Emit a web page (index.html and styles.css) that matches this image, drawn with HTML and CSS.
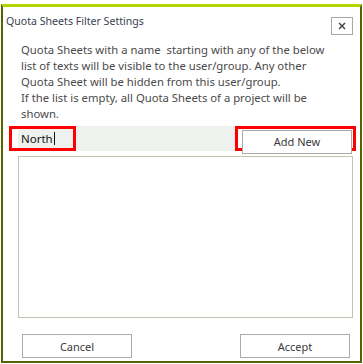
FILE: index.html
```html
<!DOCTYPE html>
<html lang="en">
<head>
    <meta charset="UTF-8">
    <title>Quota Sheets Filter Settings</title>
    <link rel="stylesheet" href="styles.css">
</head>
<body>
    <div class="dialog">
        <header class="dialog-header">
            <h1 class="dialog-title">Quota Sheets Filter Settings</h1>
            <button class="close-btn">
                <svg width="8" height="8" viewBox="0 0 8 8" stroke="#444" stroke-width="1.4">
                    <line x1="1" y1="1" x2="7" y2="7"></line>
                    <line x1="7" y1="1" x2="1" y2="7"></line>
                </svg>
            </button>
        </header>

        <p class="description">
            Quota Sheets with a name&nbsp; starting with any of the below<br>
            list of texts will be visible to the user/group. Any other<br>
            Quota Sheet will be hidden from this user/group.<br>
            If the list is empty, all Quota Sheets of a project will be<br>
            shown.
        </p>

        <div class="add-row">
            <div class="highlight name-box">
                <div class="name-input">North<span class="caret"></span></div>
            </div>
            <div class="highlight add-box">
                <button class="btn add-btn">Add New</button>
            </div>
        </div>

        <div class="filter-list"></div>

        <footer class="dialog-footer">
            <button class="btn">Cancel</button>
            <button class="btn">Accept</button>
        </footer>
    </div>
</body>
</html>
```

FILE: styles.css
```css
* {
    margin: 0;
    padding: 0;
    box-sizing: border-box;
    font-family: 'Noto Sans', sans-serif;
}

body {
    background-color: #ffffff;
    padding: 4px 0 0 1px;
}

.dialog {
    width: 361px;
    height: 359px;
    border: 2px solid #566400;
    border-top: 3px solid #b2d600;
    background-color: #ffffff;
    display: flex;
    flex-direction: column;
}

.dialog-header {
    display: flex;
    align-items: flex-start;
    justify-content: space-between;
    padding: 7px 7px 0 3px;
    height: 32px;
}

.dialog-title {
    font-size: 10.6px;
    font-weight: 400;
    color: #3c4150;
    line-height: 15px;
}

.close-btn {
    margin-top: 3px;
    width: 22px;
    height: 18px;
    border: 1px solid #a8a8a8;
    background: #ffffff;
    display: flex;
    align-items: center;
    justify-content: center;
}

.description {
    padding: 3px 0 0 18px;
    font-size: 11.3px;
    line-height: 16px;
    color: #4a4a4a;
    height: 87px;
}

.add-row {
    display: flex;
    justify-content: space-between;
    margin: 0 4px 0 6px;
    background-color: #eff1ef;
    height: 25px;
}

.highlight {
    border: 3px solid #ff0000;
}

.name-box {
    width: 67px;
    background-color: #ffffff;
}

.name-input {
    height: 100%;
    display: flex;
    align-items: center;
    background: #eff1ef;
    margin-left: 6px;
    padding-left: 3px;
    font-size: 11.5px;
    color: #111;
}

.caret {
    display: inline-block;
    width: 1px;
    height: 13px;
    margin-left: 1px;
    background-color: #111;
}

.add-box {
    width: 121px;
    padding: 0 3px 0 4px;
    background-color: #ffffff;
}

.add-btn {
    width: 100%;
    height: 100%;
    border-top: none;
}

.filter-list {
    margin: 5px 7px 0 15px;
    border: 1px solid #c2c3b4;
    flex: 1;
}

.dialog-footer {
    display: flex;
    justify-content: space-between;
    padding: 16px 10px 3px 19px;
}

.btn {
    width: 110px;
    height: 24px;
    border: 1px solid #ababab;
    background: #ffffff;
    color: #3a3a3a;
    font-size: 11px;
}
```
